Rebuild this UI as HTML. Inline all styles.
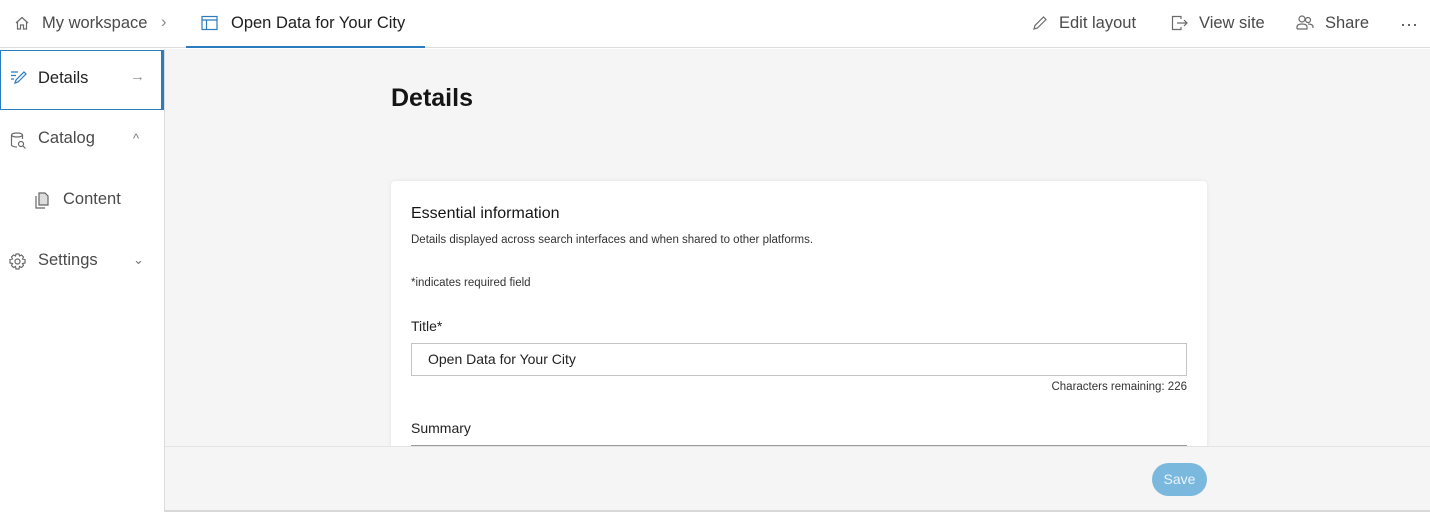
<!DOCTYPE html>
<html><head><style>
*{box-sizing:border-box;margin:0;padding:0}
body{width:1430px;height:514px;overflow:hidden;background:#fff;font-family:"Liberation Sans",sans-serif;color:#151515;position:relative}
.abs{position:absolute}
.top{left:0;top:0;width:1430px;height:48px;border-bottom:1px solid #dcdcdc;background:#fff}
.t{position:absolute;font-size:16.5px;color:#4a4a4a;white-space:nowrap}
svg{position:absolute;fill:none;stroke:#6a6a6a;stroke-width:1.2}
.side{left:0;top:49px;width:165px;height:463px;border-right:1px solid #dcdcdc;background:#fff}
.main{left:165px;top:49px;width:1265px;height:397px;background:#f5f5f5}
.card{left:391px;top:181px;width:816px;height:270px;background:#fff;border-radius:4px;box-shadow:0 0 4px rgba(0,0,0,.08)}
.foot{left:165px;top:446px;width:1265px;height:66px;background:#f5f5f5;border-top:1px solid #e4e4e4;border-bottom:2px solid #d8d8d8}
</style></head><body>
<div class="abs top">
<svg style="left:14px;top:15px" width="16" height="16" viewBox="0 0 16 16"><path d="M2 8L8 2.5 14 8M3.5 6.5V14H6.5V10H9.5V14H12.5V6.5"/></svg>
<div class="t" style="left:42px;top:14px">My workspace</div>
<div class="t" style="left:161px;top:13px;color:#888">›</div>
<svg style="left:201px;top:15px;stroke:#2b7bbf" width="17" height="16" viewBox="0 0 17 16"><rect x="1" y="1.5" width="15" height="13"/><path d="M1 5H16M5.5 5V14.5"/></svg>
<div class="t" style="left:231px;top:14px;color:#202020">Open Data for Your City</div>
<div class="abs" style="left:186px;top:46px;width:239px;height:2px;background:#2b7bbf"></div>
<svg style="left:1032px;top:15px" width="16" height="16" viewBox="0 0 16 16"><path d="M2 14L3 10.5 11.5 2 14 4.5 5.5 13Z"/></svg>
<div class="t" style="left:1059px;top:14px">Edit layout</div>
<svg style="left:1171px;top:15px" width="18" height="16" viewBox="0 0 18 16"><path d="M10 4V1.5H1.5V14.5H10V12M6 8H16M13 5L16 8 13 11"/></svg>
<div class="t" style="left:1199px;top:14px">View site</div>
<svg style="left:1296px;top:14px" width="18" height="18" viewBox="0 0 18 18"><circle cx="6" cy="5" r="3"/><path d="M1 15V13C1 11 3 10 6 10S11 11 11 13V15H1"/><circle cx="12" cy="6" r="2.5"/><path d="M12 10C15 10 17 11 17 13V14"/></svg>
<div class="t" style="left:1325px;top:14px">Share</div>
<div class="t" style="left:1400px;top:14px;font-size:18px;letter-spacing:0px">···</div>
</div>
<div class="abs side">
<div class="abs" style="left:0;top:1px;width:164px;height:60px;border:1px solid #2b7bbf;border-right:3px solid #2b7bbf"></div>
<svg style="left:10px;top:21px;stroke:#2b7bbf" width="17" height="14" viewBox="0 0 17 14"><path d="M1 2H8M1 5.5H6M1 9H4M5 13L6 10 14 2 16 4 8 12Z"/></svg>
<div class="t" style="left:38px;top:20px;color:#222">Details</div>
<div class="t" style="left:130px;top:19px;color:#999;font-size:15px">→</div>
<svg style="left:10px;top:83px" width="17" height="17" viewBox="0 0 17 17"><ellipse cx="7" cy="3" rx="5.5" ry="2"/><path d="M1.5 3V13C1.5 14 4 15 7 15M12.5 3V7"/><circle cx="11" cy="12" r="2.5"/><path d="M13 14L15.5 16.5"/></svg>
<div class="t" style="left:38px;top:80px">Catalog</div>
<div class="t" style="left:133px;top:82px;color:#777;font-size:13px">^</div>
<svg style="left:35px;top:143px;fill:#888;stroke:#666" width="15" height="17" viewBox="0 0 15 17"><path d="M1 4V16H10" fill="none"/><path d="M4 1H10L13 4V13H4Z" fill="#ddd"/></svg>
<div class="t" style="left:63px;top:141px">Content</div>
<svg style="left:9px;top:204px" width="17" height="17" viewBox="0 0 17 17"><circle cx="8.5" cy="8.5" r="2.5"/><path d="M7 1H10L10.5 3 12.5 2 14.5 4 13.5 6 16 6.5V10L13.5 10.5 14.5 12.5 12.5 14.5 10.5 13.5 10 16H7L6.5 13.5 4.5 14.5 2.5 12.5 3.5 10.5 1 10V6.5L3.5 6 2.5 4 4.5 2 6.5 3Z"/></svg>
<div class="t" style="left:38px;top:202px">Settings</div>
<div class="t" style="left:133px;top:203px;color:#777;font-size:13px">⌄</div>
</div>
<div class="abs main"></div>
<div class="abs" style="left:391px;top:84px;font-size:25px;font-weight:bold;color:#151515">Details</div>
<div class="abs card">
<div class="t" style="left:20px;top:24px;font-size:16px;color:#151515">Essential information</div>
<div class="t" style="left:20px;top:53px;font-size:11.5px;color:#333">Details displayed across search interfaces and when shared to other platforms.</div>
<div class="t" style="left:20px;top:96px;font-size:11.5px;color:#333">*indicates required field</div>
<div class="t" style="left:20px;top:137px;font-size:14px;color:#222">Title*</div>
<div class="abs" style="left:20px;top:162px;width:776px;height:33px;border:1px solid #c4c4c4"></div>
<div class="t" style="left:37px;top:170px;font-size:14px;color:#222">Open Data for Your City</div>
<div class="t" style="right:20px;top:200px;font-size:11.5px;color:#333">Characters remaining: 226</div>
<div class="t" style="left:20px;top:239px;font-size:14px;color:#222">Summary</div>
<div class="abs" style="left:20px;top:264px;width:776px;height:1px;background:#999"></div>
</div>
<div class="abs foot">
<div class="abs" style="left:987px;top:16px;width:55px;height:33px;border-radius:17px;background:#7ab8de;color:#eaf4fb;font-size:14px;text-align:center;line-height:33px">Save</div>
</div>
</body></html>
